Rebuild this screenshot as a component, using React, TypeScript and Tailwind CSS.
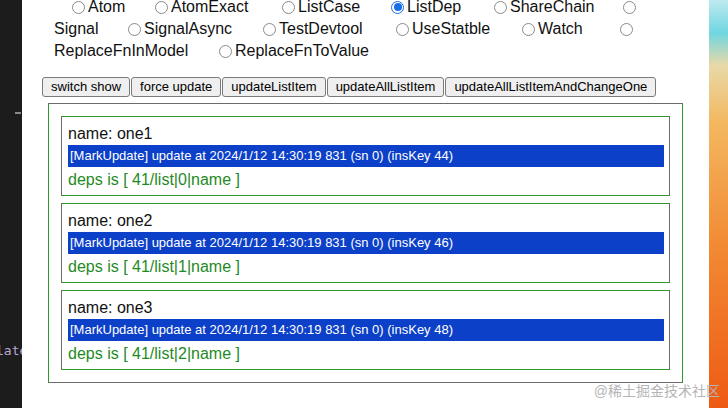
const font = { fontFamily: '"Liberation Sans", Arial, "Noto Sans CJK SC", sans-serif' };

type Item = { label: string; w: number; checked?: boolean; noRadio?: boolean };

const rows: Item[][] = [
  [
    { label: 'Atom', w: 83 },
    { label: 'AtomExact', w: 127 },
    { label: 'ListCase', w: 109 },
    { label: 'ListDep', w: 103, checked: true },
    { label: 'ShareChain', w: 129 },
    { label: '', w: 20 },
  ],
  [
    { label: 'Signal', w: 74, noRadio: true },
    { label: 'SignalAsync', w: 135 },
    { label: 'TestDevtool', w: 133 },
    { label: 'UseStatble', w: 126 },
    { label: 'Watch', w: 98 },
    { label: '', w: 20 },
  ],
  [
    { label: 'ReplaceFnInModel', w: 165, noRadio: true },
    { label: 'ReplaceFnToValue', w: 160 },
  ],
];

function Radio({ checked }: { checked?: boolean }) {
  if (checked) {
    return (
      <span className="w-[13px] h-[13px] rounded-full border border-[#1a6ee8] flex items-center justify-center shrink-0">
        <span className="w-[8px] h-[8px] rounded-full bg-[#1a6ee8]" />
      </span>
    );
  }
  return <span className="w-[13px] h-[13px] rounded-full border border-[#8a8a8a] bg-white shrink-0" />;
}

const buttons = ['switch show', 'force update', 'updateListItem', 'updateAllListItem', 'updateAllListItemAndChangeOne'];

const cards = [
  { name: 'one1', key: 44, idx: 0 },
  { name: 'one2', key: 46, idx: 1 },
  { name: 'one3', key: 48, idx: 2 },
];

export default function App() {
  return (
    <div className="relative w-[728px] h-[408px] flex overflow-hidden bg-white" style={font}>
      {/* editor strip on the left */}
      <div className="relative w-[22px] h-full bg-[#1c1c1c] shrink-0 overflow-hidden">
        <span className="absolute left-[15px] top-[112px] w-[6px] h-[2px] bg-[#8a8a8a]" />
        <span
          className="absolute left-[-4px] top-[341px] text-[13px] text-[#b9a6d6] whitespace-nowrap"
          style={{ fontFamily: '"DejaVu Sans Mono", monospace' }}
        >
          late
        </span>
      </div>

      <div className="flex-1 bg-white text-[#111]">
        <div className="pl-[32px] -mt-[4px] text-[16px] leading-[22px]">
          {rows.map((row, i) => (
            <div key={i} className={`flex items-center ${i === 0 ? 'pl-[18px]' : ''}`}>
              {row.map((it, j) => (
                <div key={j} className="flex items-center shrink-0" style={{ width: it.w }}>
                  {!it.noRadio && <Radio checked={it.checked} />}
                  {it.label && <span className={it.noRadio ? '' : 'ml-[3px]'}>{it.label}</span>}
                </div>
              ))}
            </div>
          ))}
        </div>

        <div className="flex gap-[1px] pl-[20px] mt-[15px]">
          {buttons.map((b) => (
            <button
              key={b}
              className="h-[20px] px-[8px] text-[13px] leading-[18px] text-black bg-[#efefef] border border-[#7a7a7a] rounded-[3px]"
            >
              {b}
            </button>
          ))}
        </div>

        <div className="ml-[26px] mt-[6px] w-[635px] p-[12px] border border-[#6b6b6b] border-l-[#2a9a2a] border-r-[#2a9a2a] flex flex-col gap-[7px]">
          {cards.map((c) => (
            <div
              key={c.name}
              className="h-[80px] border border-[#6b6b6b] border-t-[#2a9a2a] border-b-[#2a9a2a] pl-[6px] pr-[5px] pt-[8px]"
            >
              <div className="text-[16px] leading-[18px]">name: {c.name}</div>
              <div className="mt-[2px] h-[22px] bg-[#0c40c8] text-white text-[13px] leading-[22px] pl-[2px] whitespace-nowrap">
                [MarkUpdate] update at 2024/1/12 14:30:19 831 (sn 0) (insKey {c.key})
              </div>
              <div className="text-[16px] leading-[26px] text-[#1f8a1f]">
                deps is [ 41/list|{c.idx}|name ]
              </div>
            </div>
          ))}
        </div>
      </div>

      {/* desktop wallpaper on the right */}
      <div className="w-[19px] h-full shrink-0 bg-[linear-gradient(180deg,#bfe9ef_0%,#6fd6e0_8%,#e8d9a8_16%,#f3b860_30%,#f28a34_60%,#ee5a14_100%)]" />

      <div className="absolute right-[8px] bottom-[9px] text-[14px] leading-[16px] text-[#b5b5b5]">
        @稀土掘金技术社区
      </div>
    </div>
  );
}
